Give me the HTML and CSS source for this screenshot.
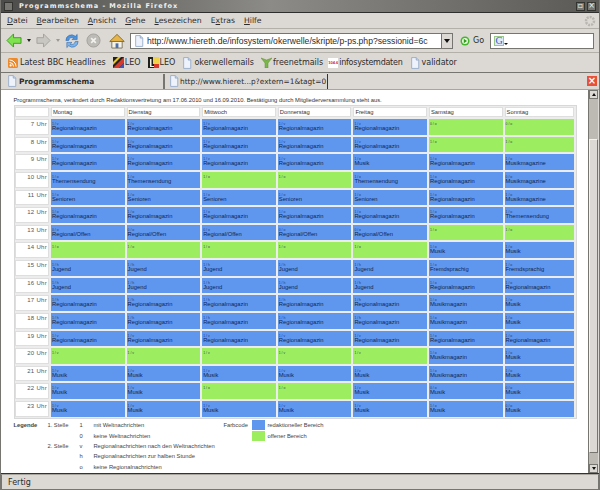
FILE: index.html
```html
<!DOCTYPE html>
<html lang="de">
    <head>
        <meta charset="UTF-8">
        <title>Programmschema - Mozilla Firefox</title>
        <link rel="stylesheet" href="styles.css">
    </head>
    <body>
        <svg class="defs" width="0" height="0">
            <symbol id="page" viewBox="0 0 12 14">
                <path d="M2 .5h5.500l3 3v10h-8.500z" fill="#eef3fb" stroke="#8fa6c6"/>
                <path d="M7.500 .5v3h3" fill="#c9d7ec" stroke="#8fa6c6"/>
            </symbol>
        </svg>
        <div class="window">
            <header class="titlebar">
                <span class="titlebar-button"></span>
                <span class="titlebar-text">Programmschema - Mozilla Firefox</span>
                <span class="titlebar-button">▫</span>
                <span class="titlebar-button">×</span>
            </header>
            <nav class="menubar">
                <span><u>D</u>atei</span>
                <span><u>B</u>earbeiten</span>
                <span><u>A</u>nsicht</span>
                <span><u>G</u>ehe</span>
                <span><u>L</u>esezeichen</span>
                <span>E<u>x</u>tras</span>
                <span><u>H</u>ilfe</span>
                <svg class="throbber" width="12" height="12" viewBox="0 0 12 12"><circle cx="6" cy="6" r="4" fill="none" stroke="#b9b6b0" stroke-width="2.500" stroke-dasharray="2 1"/></svg>
            </nav>
            <div class="toolbar">
                <svg class="tool-icon" width="16" height="15" viewBox="0 0 17 16"><path d="M1 8l7-7v4h8v6H8v4z" fill="#7fe34f" stroke="#3f9a22"/></svg>
                <span class="tool-arrow"></span>
                <svg class="tool-icon" width="15" height="15" viewBox="0 0 16 16"><path d="M15 8L8 1v4H1v6h7v4z" fill="#c9c7c2" stroke="#a3a19c"/></svg>
                <span class="tool-arrow tool-arrow-off"></span>
                <svg class="tool-icon" width="16" height="16" viewBox="0 0 17 17"><path d="M2 8a6 6 0 0 1 10-4.500L14 1.500V7H8.500l2-2A4 4 0 0 0 5 8z" fill="#4f93dc" stroke="#2a66ad" stroke-width=".6"/><path d="M15 9a6 6 0 0 1-10 4.500L3 15.500V10h5.500l-2 2A4 4 0 0 0 12 9z" fill="#7db4ea" stroke="#2a66ad" stroke-width=".6"/></svg>
                <svg class="tool-icon tool-stop" width="15" height="15" viewBox="0 0 16 16"><circle cx="8" cy="8" r="7" fill="#bdbbb6" stroke="#a3a19c"/><path d="M5.500 5.500l5 5m0-5l-5 5" stroke="#f2f1ee" stroke-width="1.800"/></svg>
                <svg class="tool-icon tool-home" width="16" height="16" viewBox="0 0 17 17"><path d="M3 8v8h11V8" fill="#f4f1e6" stroke="#7c745c"/><path d="M.8 9L8.500 1.500 16.200 9z" fill="#e5b44a" stroke="#8d6a1f"/><path d="M7 11h3v5H7z" fill="#4f6fa8"/></svg>
                <div class="urlbar">
                    <svg class="small-icon" width="10" height="12"><use href="#page"/></svg>
                    <span class="urlbar-text">http://www.hiereth.de/infosystem/okerwelle/skripte/p-ps.php?sessionid=6c</span>
                    <span class="urlbar-drop"></span>
                </div>
                <svg class="go-icon" width="10" height="10" viewBox="0 0 10 10"><circle cx="5" cy="5" r="4.500" fill="#45b52c"/><circle cx="5" cy="5" r="3" fill="#e8f8e0"/><path d="M3.800 2.800L7 5 3.800 7.200z" fill="#2f9a1c"/></svg>
                <span class="go-label">Go</span>
                <div class="searchbar">
                    <span class="search-engine">G</span>
                    <span class="search-drop"></span>
                </div>
            </div>
            <div class="bookmarks">
                <span class="bookmark"><svg width="10" height="10" viewBox="0 0 10 10"><rect width="10" height="10" rx="1.500" fill="#ee8a2a"/><circle cx="2.600" cy="7.400" r="1.100" fill="#fff"/><path d="M1.500 4.500a4 4 0 0 1 4 4M1.500 2a6.500 6.500 0 0 1 6.500 6.500" fill="none" stroke="#fff"/></svg>Latest BBC Headlines</span>
                <span class="bookmark bookmark-tight"><svg width="11" height="11" viewBox="0 0 11 11"><rect width="11" height="11" fill="#20201c"/><path d="M0 11L11 0v6l-5 5z" fill="#d9382a"/><path d="M0 5l5-5h3L0 8z" fill="#e8c52c"/><path d="M6 11l5-5v5z" fill="#3d56c8"/></svg>LEO</span>
                <span class="bookmark bookmark-tight"><svg width="11" height="11" viewBox="0 0 11 11"><rect width="11" height="11" fill="#f0d24a"/><path d="M0 0h5v7h6v4H0z" fill="#20201c"/><path d="M2 2h1.500v7H9v1H2z" fill="#f3f1e6"/><path d="M6 7h5v4H6z" fill="#d9382a"/></svg>LEO</span>
                <span class="bookmark"><svg width="10" height="12"><use href="#page"/></svg>okerwellemails</span>
                <span class="bookmark bookmark-tight"><svg width="11" height="11" viewBox="0 0 11 11"><path d="M0 1l5.500 2L11 1 7 6v5H4V6z" fill="#7ab648" stroke="#5c8f32" stroke-width=".5"/></svg>freenetmails</span>
                <span class="bookmark bookmark-tight bookmark-logo"><span class="logo-1046">104.6</span>infosystemdaten</span>
                <span class="bookmark"><svg width="10" height="12"><use href="#page"/></svg>validator</span>
            </div>
            <div class="tabs">
                <span class="tab tab-active"><svg width="10" height="12"><use href="#page"/></svg>Programmschema</span>
                <span class="tab tab-other"><svg width="10" height="12"><use href="#page"/></svg>http://www.hieret...p?extern=1&amp;tagt=0</span>
                <span class="tab-close">×</span>
            </div>
            <div class="viewport">
                <main class="page">
                    <p class="intro">Programmschema, verändert durch Redaktionsvertretung am 17.06.2010 und 16.09.2010. Bestätigung durch Mitgliederversammlung steht aus.</p>
                    <div class="schedule">
                        <div class="head"></div><div class="head">Montag</div><div class="head">Dienstag</div><div class="head">Mittwoch</div><div class="head">Donnerstag</div><div class="head">Freitag</div><div class="head">Samstag</div><div class="head">Sonntag</div>

                        <div class="time">7 Uhr</div>
                        <div class="slot"><i>1 / v</i>Regionalmagazin</div><div class="slot"><i>1 / v</i>Regionalmagazin</div><div class="slot"><i>1 / v</i>Regionalmagazin</div><div class="slot"><i>1 / v</i>Regionalmagazin</div><div class="slot"><i>1 / v</i>Regionalmagazin</div><div class="slot open"><i>0 / o</i></div><div class="slot open"><i>0 / o</i></div>

                        <div class="time">8 Uhr</div>
                        <div class="slot"><i>1 / v</i>Regionalmagazin</div><div class="slot"><i>1 / v</i>Regionalmagazin</div><div class="slot"><i>1 / v</i>Regionalmagazin</div><div class="slot"><i>1 / v</i>Regionalmagazin</div><div class="slot"><i>1 / v</i>Regionalmagazin</div><div class="slot open"><i>1 / o</i></div><div class="slot open"><i>1 / o</i></div>

                        <div class="time">9 Uhr</div>
                        <div class="slot"><i>1 / v</i>Regionalmagazin</div><div class="slot"><i>1 / v</i>Regionalmagazin</div><div class="slot"><i>1 / v</i>Regionalmagazin</div><div class="slot"><i>1 / v</i>Regionalmagazin</div><div class="slot"><i>1 / o</i>Musik</div><div class="slot"><i>1 / o</i>Regionalmagazin</div><div class="slot"><i>1 / o</i>Musikmagazine</div>

                        <div class="time">10 Uhr</div>
                        <div class="slot"><i>1 / o</i>Themensendung</div><div class="slot"><i>1 / o</i>Themensendung</div><div class="slot open"><i>1 / o</i></div><div class="slot open"><i>1 / o</i></div><div class="slot"><i>1 / o</i>Themensendung</div><div class="slot"><i>1 / o</i>Regionalmagazin</div><div class="slot"><i>0 / o</i>Musikmagazine</div>

                        <div class="time">11 Uhr</div>
                        <div class="slot"><i>1 / o</i>Senioren</div><div class="slot"><i>1 / o</i>Senioren</div><div class="slot"><i>1 / o</i>Senioren</div><div class="slot"><i>1 / o</i>Senioren</div><div class="slot"><i>1 / o</i>Senioren</div><div class="slot"><i>1 / o</i>Regionalmagazin</div><div class="slot"><i>1 / o</i>Musikmagazine</div>

                        <div class="time">12 Uhr</div>
                        <div class="slot"><i>1 / o</i>Regionalmagazin</div><div class="slot"><i>1 / o</i>Regionalmagazin</div><div class="slot"><i>1 / o</i>Regionalmagazin</div><div class="slot"><i>1 / o</i>Regionalmagazin</div><div class="slot"><i>1 / o</i>Regionalmagazin</div><div class="slot"><i>1 / o</i>Regionalmagazin</div><div class="slot"><i>1 / o</i>Themensendung</div>

                        <div class="time">13 Uhr</div>
                        <div class="slot"><i>0 / o</i>Regional/Offen</div><div class="slot"><i>0 / o</i>Regional/Offen</div><div class="slot"><i>0 / o</i>Regional/Offen</div><div class="slot"><i>0 / o</i>Regional/Offen</div><div class="slot"><i>0 / o</i>Regional/Offen</div><div class="slot open"><i>1 / o</i></div><div class="slot open"><i>1 / o</i></div>

                        <div class="time">14 Uhr</div>
                        <div class="slot open"><i>1 / o</i></div><div class="slot open"><i>1 / o</i></div><div class="slot open"><i>1 / o</i></div><div class="slot open"><i>1 / o</i></div><div class="slot open"><i>1 / o</i></div><div class="slot"><i>1 / o</i>Musik</div><div class="slot"><i>1 / o</i>Musik</div>

                        <div class="time">15 Uhr</div>
                        <div class="slot"><i>1 / h</i>Jugend</div><div class="slot"><i>1 / h</i>Jugend</div><div class="slot"><i>1 / h</i>Jugend</div><div class="slot"><i>1 / h</i>Jugend</div><div class="slot"><i>1 / h</i>Jugend</div><div class="slot"><i>1 / o</i>Fremdsprachig</div><div class="slot"><i>1 / o</i>Fremdsprachig</div>

                        <div class="time">16 Uhr</div>
                        <div class="slot"><i>1 / h</i>Jugend</div><div class="slot"><i>1 / h</i>Jugend</div><div class="slot"><i>1 / h</i>Jugend</div><div class="slot"><i>1 / h</i>Jugend</div><div class="slot"><i>1 / h</i>Jugend</div><div class="slot"><i>1 / o</i>Regionalmagazin</div><div class="slot"><i>1 / o</i>Regionalmagazin</div>

                        <div class="time">17 Uhr</div>
                        <div class="slot"><i>1 / h</i>Regionalmagazin</div><div class="slot"><i>1 / h</i>Regionalmagazin</div><div class="slot"><i>1 / h</i>Regionalmagazin</div><div class="slot"><i>1 / h</i>Regionalmagazin</div><div class="slot"><i>1 / h</i>Regionalmagazin</div><div class="slot"><i>1 / o</i>Musikmagazin</div><div class="slot"><i>1 / o</i>Musik</div>

                        <div class="time">18 Uhr</div>
                        <div class="slot"><i>1 / h</i>Regionalmagazin</div><div class="slot"><i>1 / h</i>Regionalmagazin</div><div class="slot"><i>1 / h</i>Regionalmagazin</div><div class="slot"><i>1 / h</i>Regionalmagazin</div><div class="slot"><i>1 / h</i>Regionalmagazin</div><div class="slot"><i>1 / o</i>Musikmagazin</div><div class="slot"><i>1 / o</i>Musik</div>

                        <div class="time">19 Uhr</div>
                        <div class="slot"><i>1 / v</i>Regionalmagazin</div><div class="slot"><i>1 / v</i>Regionalmagazin</div><div class="slot"><i>1 / v</i>Regionalmagazin</div><div class="slot"><i>1 / v</i>Regionalmagazin</div><div class="slot"><i>1 / v</i>Regionalmagazin</div><div class="slot"><i>1 / o</i>Regionalmagazin</div><div class="slot"><i>1 / o</i>Regionalmagazin</div>

                        <div class="time">20 Uhr</div>
                        <div class="slot open"><i>1 / v</i></div><div class="slot open"><i>1 / v</i></div><div class="slot open"><i>1 / v</i></div><div class="slot open"><i>1 / v</i></div><div class="slot open"><i>1 / v</i></div><div class="slot"><i>1 / o</i>Musikmagazin</div><div class="slot"><i>1 / o</i>Musik</div>

                        <div class="time">21 Uhr</div>
                        <div class="slot"><i>1 / v</i>Musik</div><div class="slot"><i>1 / v</i>Musik</div><div class="slot"><i>1 / v</i>Musik</div><div class="slot"><i>1 / v</i>Musik</div><div class="slot"><i>1 / v</i>Musik</div><div class="slot"><i>1 / o</i>Musikmagazin</div><div class="slot"><i>1 / o</i>Musik</div>

                        <div class="time">22 Uhr</div>
                        <div class="slot"><i>1 / v</i>Musik</div><div class="slot"><i>1 / v</i>Musik</div><div class="slot open"><i>1 / o</i></div><div class="slot open"><i>1 / o</i></div><div class="slot"><i>1 / v</i>Musik</div><div class="slot"><i>0 / o</i>Musik</div><div class="slot"><i>0 / o</i>Musik</div>

                        <div class="time">23 Uhr</div>
                        <div class="slot"><i>1 / v</i>Musik</div><div class="slot"><i>1 / v</i>Musik</div><div class="slot"><i>1 / v</i>Musik</div><div class="slot"><i>1 / v</i>Musik</div><div class="slot"><i>1 / v</i>Musik</div><div class="slot"><i>1 / o</i>Musik</div><div class="slot"><i>0 / o</i>Musik</div>
                    </div>
                    <div class="legend">
                        <b class="legend-title">Legende</b>
                        <span class="legend-key">1. Stelle</span><span class="legend-code">1</span><span class="legend-text">mit Weltnachrichten</span>
                        <span class="legend-colors">Farbcode</span><span class="swatch"></span><span class="swatch-text">redaktioneller Bereich</span>
                        <span class="legend-code row-2">0</span><span class="legend-text row-2">keine Weltnachrichten</span>
                        <span class="swatch swatch-open"></span><span class="swatch-text row-2">offener Bereich</span>
                        <span class="legend-key row-3">2. Stelle</span><span class="legend-code row-3">v</span><span class="legend-text row-3">Regionalnachrichten nach den Weltnachrichten</span>
                        <span class="legend-code row-4">h</span><span class="legend-text row-4">Regionalnachrichten zur halben Stunde</span>
                        <span class="legend-code row-5">o</span><span class="legend-text row-5">keine Regionalnachrichten</span>
                    </div>
                </main>
                <aside class="scrollbar">
                    <span class="scroll-button"><span class="scroll-up"></span></span>
                    <span class="scroll-thumb"></span>
                    <span class="scroll-button"><span class="scroll-down"></span></span>
                </aside>
            </div>
            <footer class="statusbar">Fertig</footer>
        </div>
    </body>
</html>
```

FILE: styles.css
```css
*
{
    margin: 0;
    padding: 0;
    box-sizing: border-box;
}

body
{
    height: 490px;
    width: 600px;
    overflow: hidden;

    background: #dcd9d4;
    color: #2c2c2c;
    font-family: "DejaVu Sans", sans-serif;
    font-size: 8px;
}

svg
{
    flex: none;
}

.defs
{
    position: absolute;
}

.window
{
    display: flex;
    flex-direction: column;
    height: 490px;

    border-left: 1px solid #77756f;
    border-right: 1px solid #77756f;
}

.titlebar
{
    display: flex;
    align-items: center;
    gap: 2px;
    height: 13px;
    padding: 0 3px;

    background: linear-gradient( to right, #4c4c4a, #8c8b87 45%, #5a5955 );
    border-bottom: 1px solid #2e2e2c;
    color: #f0f0ee;
    font-size: 6.5px;
    font-weight: bold;
}

.titlebar-text
{
    margin-left: 4px;
    flex: 1;
    letter-spacing: 1px;
}

.titlebar-button
{
    display: flex;
    justify-content: center;
    align-items: center;
    height: 9px;
    width: 9px;

    background: #777672;
    border: 1px solid #33332f;
    font-size: 8px;
    font-weight: normal;
    line-height: 1;
}

.menubar
{
    display: flex;
    align-items: center;
    gap: 9px;
    height: 16px;
    padding-left: 6px;

    border-bottom: 1px solid #b3b0aa;
    font-size: 7.7px;
}

.menubar u
{
    text-underline-offset: 1px;
}

.throbber
{
    margin-left: auto;
    margin-right: 3px;
}

.toolbar
{
    display: flex;
    align-items: center;
    height: 24px;
    padding-left: 5px;

    border-bottom: 1px solid #b3b0aa;
}

.tool-arrow
{
    margin: 0 5px;

    border-top: 3px solid #222;
    border-left: 2px solid transparent;
    border-right: 2px solid transparent;
}

.tool-arrow-off
{
    margin-right: 4px;

    border-top-color: #999;
}

.tool-stop
{
    margin-left: 6px;
}

.tool-home
{
    margin-left: 8px;
}

.urlbar
{
    display: flex;
    align-items: center;
    height: 16px;
    width: 323px;
    margin-left: 5px;
    padding-left: 3px;

    background: #fff;
    border: 1px solid #77756f;
    font-family: "Liberation Sans", sans-serif;
    font-size: 8.6px;
}

.urlbar-text
{
    flex: 1;
    margin-left: 3px;
    overflow: hidden;
    white-space: nowrap;
}

.urlbar-drop
{
    flex: none;
    position: relative;
    height: 14px;
    width: 11px;

    background: #dcd9d4;
    border-left: 1px solid #77756f;
}

.urlbar-drop::after
{
    content: "";
    position: absolute;
    top: 5px;
    left: 2px;

    border-top: 4px solid #111;
    border-left: 3px solid transparent;
    border-right: 3px solid transparent;
}

.go-icon
{
    margin-left: 7px;
}

.go-label
{
    margin-left: 3px;
}

.searchbar
{
    display: flex;
    align-items: center;
    height: 16px;
    width: 104px;
    margin-left: 6px;
    padding-left: 3px;

    background: #fff;
    border: 1px solid #77756f;
}

.search-engine
{
    height: 10px;
    width: 10px;

    background: #dfeaf8;
    border: 1px solid #9ac88a;
    color: #2f5fd0;
    font-family: "Liberation Serif", serif;
    font-size: 10px;
    line-height: 8px;
    text-align: center;
}

.search-drop
{
    margin-top: 7px;

    border-top: 2px solid #111;
    border-left: 2px solid transparent;
    border-right: 2px solid transparent;
}

.bookmarks
{
    display: flex;
    align-items: center;
    gap: 7px;
    height: 20px;
    padding-left: 7px;

    border-bottom: 1px solid #77756f;
}

.bookmark
{
    display: flex;
    align-items: center;
    gap: 2px;
    white-space: nowrap;
}

.bookmark-tight
{
    gap: 1px;
}

.bookmark-logo
{
    margin-left: -2px;

    letter-spacing: -.25px;
}

.logo-1046
{
    flex: none;
    height: 10px;
    width: 10px;
    overflow: hidden;

    background: #fff;
    color: #d02020;
    font-family: "Liberation Sans", sans-serif;
    font-size: 4px;
    font-weight: bold;
    letter-spacing: 0;
    line-height: 10px;
}

.tabs
{
    display: flex;
    align-items: center;
    height: 17px;
    padding-left: 3px;

    border-bottom: 1px solid #a9a6a0;
    font-size: 7.4px;
}

.tab
{
    display: flex;
    align-items: center;
    height: 15px;
    white-space: nowrap;
}

.tab-active
{
    gap: 2px;
    width: 161px;
    padding-left: 3px;

    border-right: 2px solid #77756f;
    font-weight: bold;
}

.tab-other
{
    gap: 1px;
    width: 163px;
    padding-left: 4px;

    border-right: 1px solid #33332f;
}

.tab-close
{
    height: 10px;
    width: 10px;
    margin-left: auto;
    margin-right: 2px;

    background: #e8503a;
    color: #fff;
    font-size: 10px;
    font-weight: bold;
    line-height: 9px;
    text-align: center;
}

.viewport
{
    display: flex;
    height: 384px;

    background: linear-gradient( to right, #fff 587px, #dcd9d4 587px );
    border-bottom: 1px solid #33332f;
}

.page
{
    flex: 1;
    padding: 6px 0 0 13px;

    color: #333;
    font-family: "Liberation Sans", sans-serif;
    font-size: 5.8px;
}

.intro
{
    height: 9px;
    margin-left: -.6px;

    line-height: 9px;
    white-space: nowrap;
}

.schedule
{
    display: grid;
    grid-template-columns: 34px 73.6px 73.6px 73.6px 73.6px 73.6px 73.6px 69.4px;
    grid-template-rows: 10px repeat( 17, 15.625px );
    gap: 2px;
    width: 563px;
    padding: 1px 2px 1px 0;

    background: #ececec;
    border: 1px solid #d8d8d8;
}

.head
{
    padding-left: 1px;

    background: #fff;
    border: 1px solid #dedede;
    line-height: 8px;
}

.time
{
    padding: 1px 1px 0 0;

    background: #fff;
    border: 1px solid #dedede;
    color: #555;
    font-size: 6px;
    letter-spacing: .3px;
    text-align: right;
}

.slot
{
    padding: 2px 0 0 1px;

    background: #6097ee;
    color: #10264e;
    line-height: 7px;
    white-space: nowrap;
}

.slot i
{
    display: block;
    height: 4px;

    font-size: 3.4px;
    font-style: normal;
    line-height: 6px;
    opacity: .8;
}

.open
{
    background: #9cee60;
}

.legend
{
    display: grid;
    grid-template-columns: 34px 32px 14px 130px 28px 14px 1fr;
    grid-auto-rows: 10.4px;
    align-items: center;
    margin: 1.5px 0 0 -.6px;

    color: #444;
}

.legend-title
{
    grid-column: 1;
    grid-row: 1;
}

.legend-key
{
    grid-column: 2;
    grid-row: 1;
}

.legend-code
{
    grid-column: 3;
    grid-row: 1;
}

.legend-text
{
    grid-column: 4;
    grid-row: 1;
    white-space: nowrap;
}

.legend-colors
{
    grid-column: 5;
    grid-row: 1;
}

.swatch
{
    grid-column: 6;
    grid-row: 1;
    height: 10px;
    width: 13px;
    margin-left: 1px;

    background: #6097ee;
}

.swatch-open
{
    grid-row: 2;

    background: #9cee60;
}

.swatch-text
{
    grid-column: 7;
    grid-row: 1;
    margin-left: 2px;
}

.legend .row-2
{
    grid-row: 2;
}

.legend .row-3
{
    grid-row: 3;
}

.legend .row-4
{
    grid-row: 4;
}

.legend .row-5
{
    grid-row: 5;
}

.scrollbar
{
    display: flex;
    flex-direction: column;
    flex: none;
    width: 10px;
    margin-right: 1px;

    background: #bdbab3;
    border-left: 1px solid #77756f;
}

.scroll-button
{
    display: flex;
    justify-content: center;
    align-items: center;
    flex: none;
    height: 9px;

    background: #dcd9d4;
    border: 1px solid #77756f;
}

.scroll-button:last-child
{
    margin-top: auto;
}

.scroll-up
{
    border-bottom: 3px solid #111;
    border-left: 2px solid transparent;
    border-right: 2px solid transparent;
}

.scroll-down
{
    border-top: 3px solid #111;
    border-left: 2px solid transparent;
    border-right: 2px solid transparent;
}

.scroll-thumb
{
    flex: none;
    height: 314px;
    margin-top: 40px;

    background: #dcd9d4;
    border: 1px solid #77756f;
    border-top-color: #f4f3f0;
    border-left-color: #f4f3f0;
}

.statusbar
{
    display: flex;
    align-items: center;
    height: 16px;
    padding-left: 6px;

    border: 1px solid #77756f;
    border-top: 1px solid #a9a6a0;
}
```
